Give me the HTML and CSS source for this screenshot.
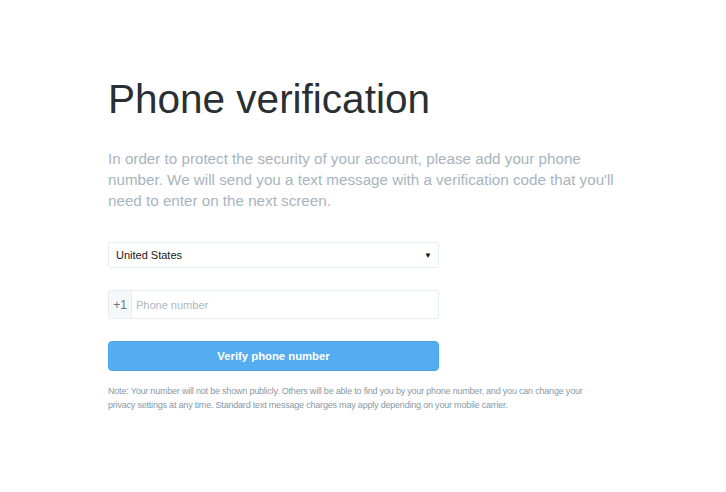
FILE: index.html
```html
<!DOCTYPE html>
<html>
<head>
<meta charset="utf-8">
<link rel="stylesheet" href="styles.css">
</head>
<body>
<main class="page">
  <h1 class="title">Phone verification</h1>
  <p class="lead">In order to protect the security of your account, please add your phone number. We will send you a text message with a verification code that you'll need to enter on the next screen.</p>
  <div class="form">
    <div class="select">
      <span>United States</span>
      <span class="caret">&#9660;</span>
    </div>
    <div class="phone">
      <span class="code">+1</span>
      <span class="placeholder">Phone number</span>
    </div>
    <button class="btn">Verify phone number</button>
    <p class="note">Note: Your number will not be shown publicly. Others will be able to find you by your phone number, and you can change your privacy settings at any time. Standard text message charges may apply depending on your mobile carrier.</p>
  </div>
</main>
</body>
</html>
```
FILE: styles.css
```css
html, body {
  margin: 0;
  padding: 0;
  background: #fff;
  font-family: "Liberation Sans", Arial, sans-serif;
}
.page {
  padding: 75px 0 0 108px;
  width: 520px;
}
.title {
  margin: 0;
  font-size: 40.5px;
  font-weight: normal;
  color: #292f33;
  line-height: 48px;
}
.lead {
  margin: 25px 0 0;
  font-size: 15.2px;
  line-height: 21px;
  color: #a8b4be;
}
.form {
  width: 331px;
  margin-top: 31px;
}
.select {
  height: 24px;
  border: 1px solid #e6ecf0;
  border-radius: 3px;
  display: flex;
  align-items: center;
  justify-content: space-between;
  padding: 0 6px 0 7px;
  font-size: 11px;
  color: #14171a;
}
.caret {
  font-size: 8px;
  color: #14171a;
}
.phone {
  margin-top: 22px;
  height: 27px;
  border: 1px solid #e6ecf0;
  border-radius: 3px;
  display: flex;
  align-items: stretch;
  font-size: 11px;
}
.code {
  width: 22px;
  background: #f5f8fa;
  border-right: 1px solid #e6ecf0;
  display: flex;
  align-items: center;
  justify-content: center;
  color: #66757f;
  font-size: 12px;
}
.placeholder {
  display: flex;
  align-items: center;
  padding-left: 4px;
  color: #aab8c2;
}
.btn {
  display: block;
  width: 331px;
  margin-top: 22px;
  height: 30px;
  border: 1px solid #4ba4e8;
  border-radius: 4px;
  background: #55acee;
  color: #fff;
  font-family: "Liberation Sans", Arial, sans-serif;
  font-weight: bold;
  font-size: 11.3px;
  padding: 0;
}
.note {
  width: 500px;
  margin: 13px 0 0;
  font-size: 9px;
  letter-spacing: -0.2px;
  line-height: 14px;
  color: #8899a6;
}
```
